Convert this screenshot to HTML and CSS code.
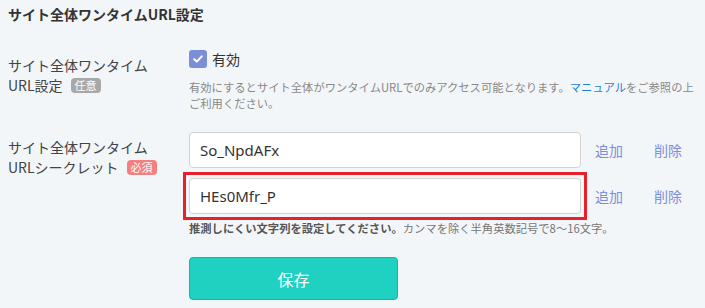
FILE: index.html
```html
<!DOCTYPE html>
<html lang="ja">
<head>
    <meta charset="UTF-8">
    <meta name="viewport" content="width=device-width, initial-scale=1.0">
    <title>サイト全体ワンタイムURL設定</title>
    <link rel="stylesheet" href="styles.css">
</head>
<body>
    <div class="page">
        <h2 class="title">サイト全体ワンタイムURL設定</h2>

        <div class="row row-first">
            <div class="label">
                サイト全体ワンタイム<br>URL設定<span class="badge badge-any">任意</span>
            </div>
            <div class="field">
                <label class="check">
                    <span class="box">
                        <svg width="10" height="8" viewBox="0 0 10 8"><path d="M1.2 4.2 L3.8 6.6 L8.8 1.4" fill="none" stroke="#fff" stroke-width="2" stroke-linecap="round" stroke-linejoin="round"/></svg>
                    </span>
                    有効
                </label>
                <p class="help">有効にするとサイト全体がワンタイムURLでのみアクセス可能となります。<a href="#">マニュアル</a>をご参照の上<br>ご利用ください。</p>
            </div>
        </div>

        <div class="row row-second">
            <div class="label">
                サイト全体ワンタイム<br>URLシークレット<span class="badge badge-req">必須</span>
            </div>
            <div class="field">
                <div class="secret">
                    <span class="wrap"><input type="text" class="text" value="So_NpdAFx"></span>
                    <a href="#" class="act add">追加</a>
                    <a href="#" class="act del">削除</a>
                </div>
                <div class="secret">
                    <span class="wrap marked"><input type="text" class="text" value="HEs0Mfr_P"></span>
                    <a href="#" class="act add">追加</a>
                    <a href="#" class="act del">削除</a>
                </div>
                <p class="hint"><b>推測しにくい文字列を設定してください。</b>カンマを除く半角英数記号で8〜16文字。</p>
                <button class="save">保存</button>
            </div>
        </div>
    </div>
</body>
</html>
```

FILE: styles.css
```css
body {
    margin: 0;
    background-color: #f3f6f8;
    font-family: "Noto Sans CJK JP", "Noto Sans", sans-serif;
    color: #444;
}
.page {
    padding: 4px 8px 0 8px;
}
.title {
    margin: 0 0 26px 0;
    font-size: 14px;
    line-height: 20px;
    font-weight: bold;
    color: #333;
}
.row {
    display: grid;
    grid-template-columns: 181px 1fr;
}
.row-second {
    margin-top: 21px;
}
.label {
    padding-top: 5px;
    font-size: 14px;
    line-height: 20px;
    color: #444;
}
.badge {
    display: inline-block;
    margin-left: 8px;
    padding: 0 4px;
    height: 15px;
    line-height: 15px;
    font-size: 11px;
    color: #fff;
    border-radius: 4px;
    vertical-align: 1px;
}
.badge-any {
    background-color: #a8a8a8;
}
.badge-req {
    background-color: #f2807e;
}
.check {
    display: flex;
    align-items: center;
    height: 18px;
    font-size: 14px;
    color: #333;
}
.box {
    display: flex;
    align-items: center;
    justify-content: center;
    width: 18px;
    height: 18px;
    margin-right: 5px;
    border-radius: 3px;
    background-color: #7b8fd6;
}
.help {
    margin: 11px 0 0 0;
    font-size: 11.3px;
    line-height: 16px;
    color: #888;
    white-space: nowrap;
}
.help a {
    color: #1b7fd6;
    text-decoration: none;
}
.secret {
    display: flex;
    align-items: center;
    height: 36px;
}
.secret + .secret {
    margin-top: 10px;
}
.wrap {
    position: relative;
    display: block;
}
.marked::after {
    content: "";
    position: absolute;
    top: -6px;
    left: -6px;
    right: -6px;
    bottom: -6px;
    border: 3px solid #e8202a;
}
.text {
    display: block;
    box-sizing: border-box;
    width: 392px;
    height: 36px;
    padding: 0 10px;
    border: 1px solid #d2d2d2;
    border-radius: 4px;
    background: #fff;
    font-family: "Noto Sans", sans-serif;
    font-size: 15px;
    color: #333;
}
.act {
    font-size: 14px;
    color: #7d8fdc;
    text-decoration: none;
}
.add {
    margin-left: 14px;
}
.del {
    margin-left: 31px;
}
.hint {
    margin: 6px 0 0 0;
    font-size: 11.3px;
    line-height: 16px;
    color: #777;
}
.hint b {
    color: #555;
}
.save {
    display: block;
    margin-top: 21px;
    width: 209px;
    height: 43px;
    border: 1px solid #14b6a7;
    border-radius: 4px;
    background-color: #1fd1c1;
    color: #fff;
    font-family: "Noto Sans CJK JP", sans-serif;
    font-size: 16px;
}
```
